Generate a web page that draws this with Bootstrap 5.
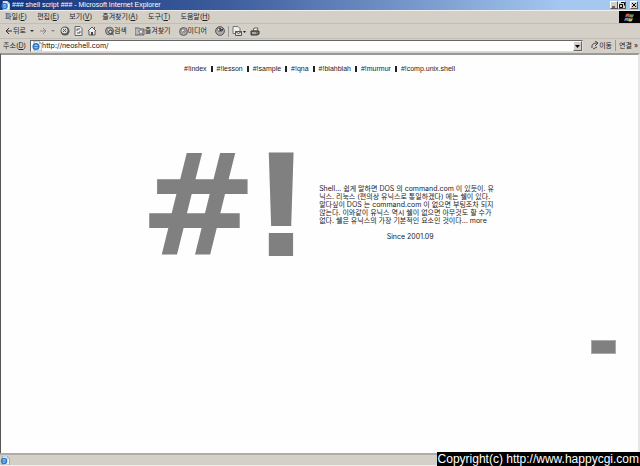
<!DOCTYPE html>
<html lang="ko">
<head>
<meta charset="utf-8">
<meta name="viewport" content="width=device-width, initial-scale=1">
<title>### shell script ###</title>
<link href="https://cdn.jsdelivr.net/npm/bootstrap@5.3.0/dist/css/bootstrap.min.css" rel="stylesheet">
<style>
body{font:7px/8px Inter,"Noto Sans CJK KR",sans-serif;color:#222;background:#d4d0c8}
button{font:inherit;color:inherit;background:none;border:0;padding:0;white-space:nowrap}
svg{display:block;flex:none}
.titlebar{height:10px;background:linear-gradient(90deg,#14357c,#3c5c9c 35%,#a4c8f0 88%);color:#fff;padding:0 2px 0 1px;font-family:"Liberation Sans",sans-serif}
.titletext{margin-left:2px}
.winbtn{width:8px;height:8px;background:#d4d0c8;border:1px solid;border-color:#fff #555 #555 #fff;color:#000}
.menubar{height:14px;border-top:1px solid #eee;border-bottom:1px solid #c2beb6;padding-left:5px;gap:10px}
.throbber{width:21px;height:12px;background:#000}
.tools{height:15px;border-bottom:1px solid #c2beb6;padding-left:5px}
.sep{width:1px;height:11px;background:#999;margin:0 3px}
.addr{height:14px;padding:0 2px 1px 3px}
.urlbox{height:12px;background:#fff;border:1px solid #666;border-right-color:#ddd;border-bottom-color:#ddd;padding-left:1px}
.urlbox input{border:0;outline:0;padding:0;font-size:7px;line-height:10px;color:#111;background:none;min-width:0}
.drop{width:9px;height:10px;background:#d4d0c8;border:1px solid;border-color:#fff #666 #666 #fff}
.page{background:#fefefe;border-top:2px solid #999;border-left:1px solid #555;border-right:2px solid #e8e6e2}
.sitenav{padding-top:10px;gap:4px}
.sitenav a,.story a{color:#222;text-decoration:none}
.sitenav{font-family:"Liberation Sans",sans-serif}
.bar{width:2px;height:6px;background:#222}
.hero{padding-top:62px;padding-left:2px;gap:14px}
.bang{font:bold 140px/140px "DejaVu Sans",sans-serif;color:#808080;white-space:nowrap}
.bang span{font-family:"Liberation Sans",sans-serif;font-size:144px;-webkit-text-stroke:4px #808080}
.story{padding-top:14px;width:182px}
.block{width:25px;height:14px;background:#808080;border:1px solid #aaa;margin:64px 22px 0 0}
.status{height:13px;border-top:2px solid #b0aca4;border-bottom:1px solid #eee}
.credit{right:0;bottom:0;background:#000;color:#fff;font:12px/14px "Liberation Sans",sans-serif;padding:0 1px}
</style>
<script src="https://cdn.jsdelivr.net/npm/bootstrap@5.3.0/dist/js/bootstrap.bundle.min.js"></script>
</head>
<body class="d-flex flex-column min-vh-100 position-relative">
<svg width="0" height="0" class="position-absolute" aria-hidden="true"><defs>
<symbol id="ie" viewBox="0 0 10 10"><path d="M2 0h5l3 3v7H2z" fill="#eef5fc" stroke="#567" stroke-width=".5"/><path d="M7 0v3h3" fill="#a9bfd8"/><circle cx="4" cy="5.5" r="2.8" fill="#9cc8ee" stroke="#2878c8" stroke-width="1.5"/><path d="M1.5 5.6h5" stroke="#2878c8"/></symbol>
<symbol id="globe" viewBox="0 0 10 10"><circle cx="5" cy="5" r="4.4" fill="#aaa" stroke="#555"/><path d="M2 3l3-1 1 2-2 2zM6 6l2-2" fill="#eee" stroke="#555" stroke-width=".7"/></symbol>
</defs></svg>
<header>
<div class="titlebar d-flex align-items-center">
<svg width="9" height="9"><use href="#ie"/></svg><span class="me-auto text-nowrap titletext">### shell script ### - Microsoft Internet Explorer</span>
<button class="winbtn" aria-label="Minimize"><svg width="6" height="6"><path d="M1 5h3" stroke="#000"/></svg></button>
<button class="winbtn" aria-label="Restore"><svg width="6" height="6"><path d="M2 .5h3.500v3M.5 2.500h3v3h-3z" fill="none" stroke="#000"/></svg></button>
<button class="winbtn ms-1" aria-label="Close"><svg width="6" height="6"><path d="M1 1l4 4M5 1L1 5" stroke="#000"/></svg></button>
</div>
<nav class="menubar d-flex align-items-center" aria-label="Menu">
<button>파일(<u>F</u>)</button><button>편집(<u>E</u>)</button><button>보기(<u>V</u>)</button><button>즐겨찾기(<u>A</u>)</button><button>도구(<u>T</u>)</button><button>도움말(<u>H</u>)</button>
<span class="throbber ms-auto d-flex align-items-center justify-content-center"><svg width="11" height="9" viewBox="0 0 11 9"><path d="M2 1q2-1 4 0L5 4Q3 3 1 4z" fill="#c65b45"/><path d="M6 1q2 1 4 0L9 4Q7 5 5 4z" fill="#689963"/><path d="M1 5q2-1 4 0L4 8Q2 7 0 8z" fill="#5689c8"/><path d="M5 5q2 1 4 0L8 8Q6 9 4 8z" fill="#c9b456"/></svg></span>
</nav>
<div class="tools d-flex align-items-center">
<button class="d-flex align-items-center"><svg width="8" height="8"><path d="M7 4H1M4 1L1 4l3 3" fill="none" stroke="#333"/></svg>뒤로</button>
<svg class="ms-1 me-1" width="5" height="4"><path d="M0 1h4L2 3z" fill="#333"/></svg>
<button aria-label="Forward"><svg width="8" height="8"><path d="M1 4h6M4 1l3 3-3 3" fill="none" stroke="#888"/></svg></button>
<svg class="ms-1 me-1" width="5" height="4"><path d="M0 1h4L2 3z" fill="#888"/></svg>
<button aria-label="Stop"><svg width="10" height="10" viewBox="0 0 10 10"><circle cx="5" cy="5" r="4.500" fill="#555"/><circle cx="4.500" cy="4.500" r="3" fill="#ddd"/><path d="M3 3l3 3M6 3L3 6" stroke="#555"/></svg></button>
<button class="ms-1" aria-label="Refresh"><svg width="9" height="10"><path d="M1 .5h5l2 2v7H1z" fill="#eee" stroke="#666"/><path d="M3 5V3h3M6 5v2H3" fill="none" stroke="#555"/></svg></button>
<button class="ms-1" aria-label="Home"><svg width="10" height="10"><path d="M1 5l4-4 4 4M2 5v4h6V5" fill="#eee" stroke="#555"/><path d="M4 6h2v3H4zM7 1h1v3" fill="#444"/></svg></button>
<button class="d-flex align-items-center ms-2"><svg width="9" height="10" viewBox="0 0 10 10"><use href="#globe"/><circle cx="6" cy="6" r="2" fill="#ddd" stroke="#333"/><path d="M7 7l3 3" stroke="#333"/></svg>검색</button>
<button class="d-flex align-items-center ms-2"><svg width="10" height="9"><path d="M0 3V1h4l1 1h4v6H0z" fill="#bbb" stroke="#666"/><path d="M6 2l1 2h2L7 5l1 3-2-2-2 2 1-3-2-1h2z" fill="#eee" stroke="#555" stroke-width=".5"/></svg>즐겨찾기</button>
<button class="d-flex align-items-center ms-2"><svg width="9" height="9" viewBox="0 0 10 10"><use href="#globe"/></svg>미디어</button>
<button class="ms-2" aria-label="History"><svg width="10" height="10"><use href="#globe"/><path d="M5 5V2M5 5l3-2" stroke="#111"/></svg></button>
<span class="sep"></span>
<button aria-label="Mail"><svg width="14" height="10"><path d="M1 .5h5l2 2v5H1z" fill="#eee" stroke="#777"/><path d="M3.500 5.500h6v4h-6zM3.500 5.500l3 2 3-2" fill="#ddd" stroke="#555"/><path d="M11 5h3l-1.500 2z" fill="#222"/></svg></button>
<button class="ms-1" aria-label="Print"><svg width="10" height="9"><path d="M3 4l1-3h4L7 4z" fill="#eee" stroke="#666"/><path d="M1 4h8v3L7 8H1z" fill="#777" stroke="#333"/><path d="M2 6h4" stroke="#ddd"/></svg></button>
</div>
<div class="addr d-flex align-items-center">
<label for="url" class="text-nowrap me-1">주소(<u>D</u>)</label>
<div class="urlbox d-flex align-items-center flex-fill"><svg width="10" height="10"><use href="#ie"/></svg><input id="url" class="flex-fill" type="text" value="http://neoshell.com/"><button class="drop" aria-label="Address list"><svg width="7" height="8"><path d="M1 3h5L3.500 6z" fill="#000"/></svg></button></div>
<button class="d-flex align-items-center ms-2"><svg width="8" height="9"><path d="M1 7Q0 2 6 2M4 0l3 2-3 3M2 8l4-2" fill="none" stroke="#444"/></svg>이동</button>
<span class="sep"></span>
<button>연결 »</button>
</div>
</header>
<main class="page flex-fill">
<nav class="sitenav d-flex justify-content-center align-items-center">
<a href="#index">#!index</a><span class="bar"></span><a href="#lesson">#!lesson</a><span class="bar"></span><a href="#sample">#!sample</a><span class="bar"></span><a href="#qna">#!qna</a><span class="bar"></span><a href="#blahblah">#!blahblah</a><span class="bar"></span><a href="#murmur">#!murmur</a><span class="bar"></span><a href="#unix">#!comp.unix.shell</a>
</nav>
<section class="hero d-flex justify-content-center align-items-center">
<div class="bang">#<span>!</span></div>
<div class="story text-nowrap">
<p class="mb-2">Shell... 쉽게 말하면 DOS 의 command.com 이 있듯이. 유<br>닉스. 리눅스 (편의상 유닉스로 통일하겠다) 에는 쉘이 있다.<br>알다싶이 DOS 는 command.com 이 없으면 부팅조차 되지<br>않는다. 이와같이 유닉스 역시 쉘이 없으면 아무것도 할 수가<br>없다. 쉘은 유닉스의 가장 기본적인 요소인 것이다... <a href="#more">more</a></p>
<p class="text-center mb-0">Since 2001.09</p>
</div>
</section>
<div class="block ms-auto"></div>
</main>
<footer>
<div class="status d-flex align-items-center"><svg width="10" height="9"><use href="#ie"/></svg></div>
<div class="credit position-absolute text-nowrap">Copyright(c) http://www.happycgi.com</div>
</footer>
</body>
</html>
